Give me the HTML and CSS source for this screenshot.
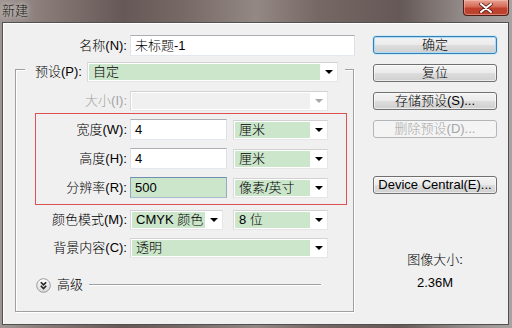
FILE: index.html
```html
<!DOCTYPE html>
<html>
<head>
<meta charset="utf-8">
<link rel="stylesheet" href="styles.css">
</head>
<body>
<div class="titlebar">
  <span class="title">新建</span>
  <div class="close">
    <svg width="14" height="10" viewBox="0 0 14 10"><path d="M2 1 L12 9 M12 1 L2 9" stroke="#5a2018" stroke-width="3.6" stroke-linecap="round"/><path d="M2 1 L12 9 M12 1 L2 9" stroke="#fff" stroke-width="2" stroke-linecap="round"/></svg>
  </div>
</div>
<div class="window">
  <div class="form">
    <div class="row name-row">
      <span class="lbl">名称(N):</span>
      <div class="input name">未标题-1</div>
    </div>
    <div class="group">
      <div class="preset">
        <span class="lbl">预设(P):</span>
        <div class="select w251"><span class="val">自定</span><span class="arr"><i class="tri"></i></span></div>
      </div>
      <div class="row grow size-row">
        <span class="lbl dis">大小(I):</span>
        <div class="select disabled w198"><span class="val"></span><span class="arr"><i class="tri"></i></span></div>
      </div>
      <div class="red">
        <div class="row rrow">
          <span class="lbl">宽度(W):</span>
          <div class="input num">4</div>
          <div class="select w95 unit"><span class="val">厘米</span><span class="arr"><i class="tri"></i></span></div>
        </div>
        <div class="row rrow">
          <span class="lbl">高度(H):</span>
          <div class="input num">4</div>
          <div class="select w95 unit"><span class="val">厘米</span><span class="arr"><i class="tri"></i></span></div>
        </div>
        <div class="row rrow">
          <span class="lbl">分辨率(R):</span>
          <div class="input num focus">500</div>
          <div class="select w95 unit"><span class="val">像素/英寸</span><span class="arr"><i class="tri"></i></span></div>
        </div>
      </div>
      <div class="row grow color-row">
        <span class="lbl">颜色模式(M):</span>
        <div class="select w93"><span class="val">CMYK 颜色</span><span class="arr"><i class="tri"></i></span></div>
        <div class="select w95 unit2"><span class="val">8 位</span><span class="arr"><i class="tri"></i></span></div>
      </div>
      <div class="row grow bg-row">
        <span class="lbl">背景内容(C):</span>
        <div class="select w198"><span class="val">透明</span><span class="arr"><i class="tri"></i></span></div>
      </div>
      <div class="adv">
        <svg class="adv-icon" width="15" height="15" viewBox="0 0 15 15">
          <defs><linearGradient id="g" x1="0" y1="0" x2="0" y2="1"><stop offset="0" stop-color="#ffffff"/><stop offset="1" stop-color="#d8d8d8"/></linearGradient></defs>
          <circle cx="7.5" cy="7.5" r="6.8" fill="url(#g)" stroke="#9a9a9a" stroke-width="1"/>
          <path d="M4.8 4.2 L7.5 6.9 L10.2 4.2 M4.8 7.8 L7.5 10.5 L10.2 7.8" fill="none" stroke="#222" stroke-width="1.6"/>
        </svg>
        <span class="adv-text">高级</span>
        <span class="adv-line"></span>
      </div>
    </div>
  </div>
  <div class="side">
    <div class="btn default">确定</div>
    <div class="btn">复位</div>
    <div class="btn">存储预设(S)...</div>
    <div class="btn disabled">删除预设(D)...</div>
    <div class="btn device">Device Central(E)...</div>
    <div class="info">图像大小:</div>
    <div class="info second">2.36M</div>
  </div>
</div>
</body>
</html>
```
FILE: styles.css
```css
* { box-sizing: border-box; }
html, body { margin: 0; padding: 0; }
body {
  width: 512px;
  height: 328px;
  overflow: hidden;
  font-family: "Liberation Sans", "Noto Sans CJK SC", sans-serif;
  font-size: 13px;
  font-weight: 300;
  color: #000;
  background: linear-gradient(90deg, #a09794 0%, #877a77 9%, #665856 24%, #766966 36%, #948884 50%, #766865 62%, #655856 78%, #928a88 90%, #a8a3a2 100%);
}
.titlebar {
  height: 22px;
  display: flex;
  justify-content: space-between;
  align-items: flex-start;
}
.title {
  margin: 3px 0 0 2px;
  font-size: 13px;
  line-height: 16px;
  color: #111;
  text-shadow: 0 0 5px rgba(230, 225, 222, 0.9), 0 0 8px rgba(230, 225, 222, 0.7);
}
.close {
  width: 46px;
  height: 16px;
  margin-right: 3px;
  border: 1px solid #4e1d17;
  border-top: none;
  border-radius: 0 0 4px 4px;
  background: linear-gradient(#e7a393 0%, #d56a55 45%, #c0402c 55%, #b8452f 100%);
  box-shadow: inset 0 0 0 1px rgba(255, 200, 190, 0.45);
  display: flex;
  align-items: center;
  justify-content: center;
}
.window {
  height: 303px;
  margin: 0 3px 0 2px;
  border: 1px solid #505050;
  background: #f0f0f0;
  box-shadow: inset 1px 1px 0 #ffffff;
  display: flex;
}
.form {
  width: 352px;
  padding: 12px 0 0 12px;
}
.row {
  display: flex;
  align-items: center;
}
.lbl {
  display: block;
  text-align: right;
  padding-right: 3px;
  white-space: nowrap;
  line-height: 16px;
}
.lbl.dis { color: #a3a3a3; }
.name-row { height: 21px; }
.name-row .lbl { width: 115px; }
.input {
  height: 21px;
  border: 1px solid;
  border-color: #abadb3 #dbdfe6 #e3e9ef #e2e3ea;
  background: #fff;
  padding-left: 4px;
  line-height: 19px;
  white-space: nowrap;
}
.input.name { width: 225px; }
.input.num { width: 97px; }
.input.focus {
  background: #cbe6cb;
  border-color: #6f8fae #93abc2 #a9bccf #93abc2;
}
.group {
  margin-top: 13px;
  width: 339px;
  height: 243px;
  border: 1px solid #a0a0a0;
  box-shadow: inset 1px 1px 0 #fff, 1px 1px 0 #fff;
}
.preset {
  margin: -8px 0 0 9px;
  width: 320px;
  height: 20px;
  padding: 0 7px 0 10px;
  background: #f0f0f0;
  display: flex;
  align-items: center;
}
.preset .lbl { width: 52px; text-align: left; padding: 0; }
.grow { height: 20px; }
.grow .lbl { width: 114px; }
.size-row { margin-top: 9px; }
.select {
  height: 20px;
  display: flex;
  border: 1px solid #e6e6e6;
  border-top-color: #d2d2d2;
  border-left-color: #dadada;
  background: #fff;
  padding: 1px 0 1px 1px;
}
.select .val {
  flex: 1;
  background: #cbe6cb;
  padding-left: 4px;
  line-height: 16px;
  white-space: nowrap;
  overflow: hidden;
}
.select .arr {
  width: 17px;
  display: flex;
  align-items: center;
  justify-content: center;
}
.tri {
  display: block;
  width: 0;
  height: 0;
  border-left: 4px solid transparent;
  border-right: 4px solid transparent;
  border-top: 4px solid #000;
}
.select.disabled .val { background: #f0f0f0; }
.select.disabled .tri { border-top-color: #a8a8a8; }
.w251 { width: 251px; }
.w198 { width: 198px; }
.w95 { width: 95px; }
.w93 { width: 93px; }
.unit { margin-left: 6px; }
.unit2 { margin-left: 10px; }
.red {
  margin: 2px 0 0 19px;
  width: 312px;
  border: 1px solid #dc5252;
  padding: 5px 0 6px 0;
}
.rrow { height: 21px; }
.rrow + .rrow { margin-top: 8px; }
.rrow .lbl { width: 94px; }
.color-row { margin-top: 5px; }
.bg-row { margin-top: 8px; }
.adv {
  margin: 19px 0 0 20px;
  height: 16px;
  display: flex;
  align-items: center;
}
.adv-text { margin-left: 6px; line-height: 16px; }
.adv-line {
  display: block;
  margin-left: 6px;
  width: 232px;
  height: 2px;
  border-top: 1px solid #a0a0a0;
  border-bottom: 1px solid #fff;
}
.side {
  width: 124px;
  margin-left: 18px;
  padding-top: 13px;
}
.btn {
  height: 18px;
  margin-bottom: 10px;
  border: 1px solid #707070;
  border-radius: 3px;
  background: linear-gradient(#f3f3f3 0%, #ebebeb 48%, #dddddd 52%, #cfcfcf 100%);
  box-shadow: inset 0 0 0 1px rgba(255, 255, 255, 0.6);
  text-align: center;
  line-height: 16px;
  white-space: nowrap;
}
.btn.default {
  border-color: #3c7fb1;
  box-shadow: inset 0 0 0 1px #a9dcf6, 0 0 0 1px #cfeaf8;
}
.btn.disabled {
  border-color: #b3b6b8;
  background: #f4f4f4;
  color: #a6a6a6;
  box-shadow: none;
}
.btn.device { margin-top: 38px; }
.info {
  margin-top: 58px;
  text-align: center;
  line-height: 16px;
}
.info.second { margin-top: 7px; }
```
